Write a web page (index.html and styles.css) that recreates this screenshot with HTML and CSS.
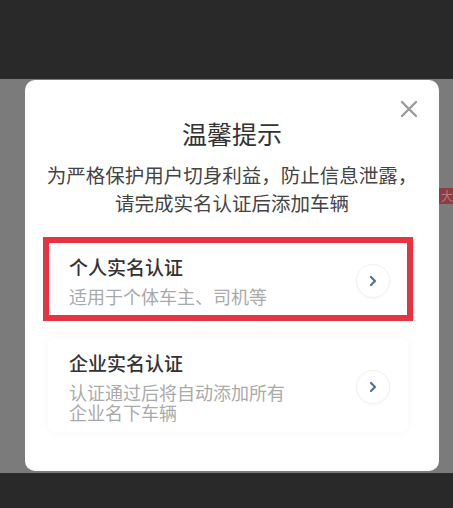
FILE: index.html
```html
<!DOCTYPE html>
<html lang="zh-CN">

<head>
  <meta charset="UTF-8">
  <meta name="viewport" content="width=device-width, initial-scale=1.0">
  <title>温馨提示</title>
  <link rel="stylesheet" href="styles.css">
</head>

<body>
  <div class="topbar"></div>

  <div class="stage">
    <div class="page">
      <div class="page-row">
        <span class="tag">大</span>
      </div>
    </div>

    <div class="dialog">
      <button class="close" aria-label="关闭">
        <svg width="18" height="18" viewBox="0 0 18 18">
          <path d="M2 2L16 16M16 2L2 16" stroke="#9b9b9b" stroke-width="2.4" stroke-linecap="round" />
        </svg>
      </button>

      <div class="title">温馨提示</div>
      <div class="intro">为严格保护用户切身利益，防止信息泄露，<br>请完成实名认证后添加车辆</div>

      <div class="options">
        <div class="option selected">
          <div class="option-text">
            <div class="option-name">个人实名认证</div>
            <div class="option-desc">适用于个体车主、司机等</div>
          </div>
          <span class="arrow">
            <svg width="10" height="12" viewBox="0 0 10 12">
              <path d="M3 2L7 6L3 10" fill="none" stroke="#5a6e9c" stroke-width="2.2" stroke-linecap="round" stroke-linejoin="round" />
            </svg>
          </span>
        </div>

        <div class="option">
          <div class="option-text">
            <div class="option-name">企业实名认证</div>
            <div class="option-desc">认证通过后将自动添加所有企业名下车辆</div>
          </div>
          <span class="arrow">
            <svg width="10" height="12" viewBox="0 0 10 12">
              <path d="M3 2L7 6L3 10" fill="none" stroke="#5a6e9c" stroke-width="2.2" stroke-linecap="round" stroke-linejoin="round" />
            </svg>
          </span>
        </div>
      </div>
    </div>
  </div>

  <div class="bottombar"></div>
</body>

</html>
```

FILE: styles.css
```css
body {
  margin: 0;
  font-family: "Noto Sans CJK SC", "Noto Sans", sans-serif;
  background-color: #7b7b7b;
  overflow: hidden;
}

.topbar {
  height: 79px;
  background-color: #292929;
}

.bottombar {
  height: 35px;
  background-color: #292929;
}

.stage {
  position: relative;
  height: 394px;
  background-color: #7b7b7b;
}

.page {
  padding-top: 109px;
}

.page-row {
  display: flex;
  justify-content: flex-end;
}

.tag {
  display: block;
  width: 24px;
  height: 16px;
  margin-right: -12px;
  background-color: #8e3b41;
  color: #b07f82;
  font-size: 12px;
  line-height: 16px;
  padding-left: 3px;
}

.dialog {
  position: absolute;
  top: 1px;
  left: 25px;
  width: 414px;
  height: 391px;
  box-sizing: border-box;
  padding: 37px 31px 0 23px;
  background-color: #fff;
  border-radius: 10px;
}

.close {
  position: absolute;
  top: 20px;
  right: 21px;
  width: 18px;
  height: 18px;
  padding: 0;
  border: none;
  background: none;
  display: flex;
}

.title {
  margin-left: 8px;
  text-align: center;
  font-size: 25px;
  line-height: 32px;
  color: #333;
}

.intro {
  margin: 12px -20px 0 -12px;
  text-align: center;
  font-size: 19.5px;
  line-height: 28px;
  color: #444;
}

.options {
  display: flex;
  flex-direction: column;
  gap: 22px;
  margin-top: 25px;
}

.option {
  display: flex;
  align-items: center;
  padding: 13px 18px 10px 21px;
  background-color: #fff;
  border-radius: 6px;
  box-shadow: 0 0 8px rgba(0, 0, 0, 0.04);
}

.option.selected {
  border-radius: 0;
  outline: 6px solid #e5333f;
  outline-offset: -1px;
}

.option-text {
  flex: 1;
}

.option-name {
  font-size: 19px;
  line-height: 24px;
  font-weight: 500;
  color: #333;
}

.option-desc {
  margin-top: 7px;
  max-width: 222px;
  font-size: 18px;
  line-height: 20px;
  color: #aaa;
}

.arrow {
  display: flex;
  align-items: center;
  justify-content: center;
  width: 32px;
  height: 32px;
  border: 1px solid #f0f0f0;
  border-radius: 50%;
  box-shadow: 0 1px 3px rgba(0, 0, 0, 0.04);
}
```
